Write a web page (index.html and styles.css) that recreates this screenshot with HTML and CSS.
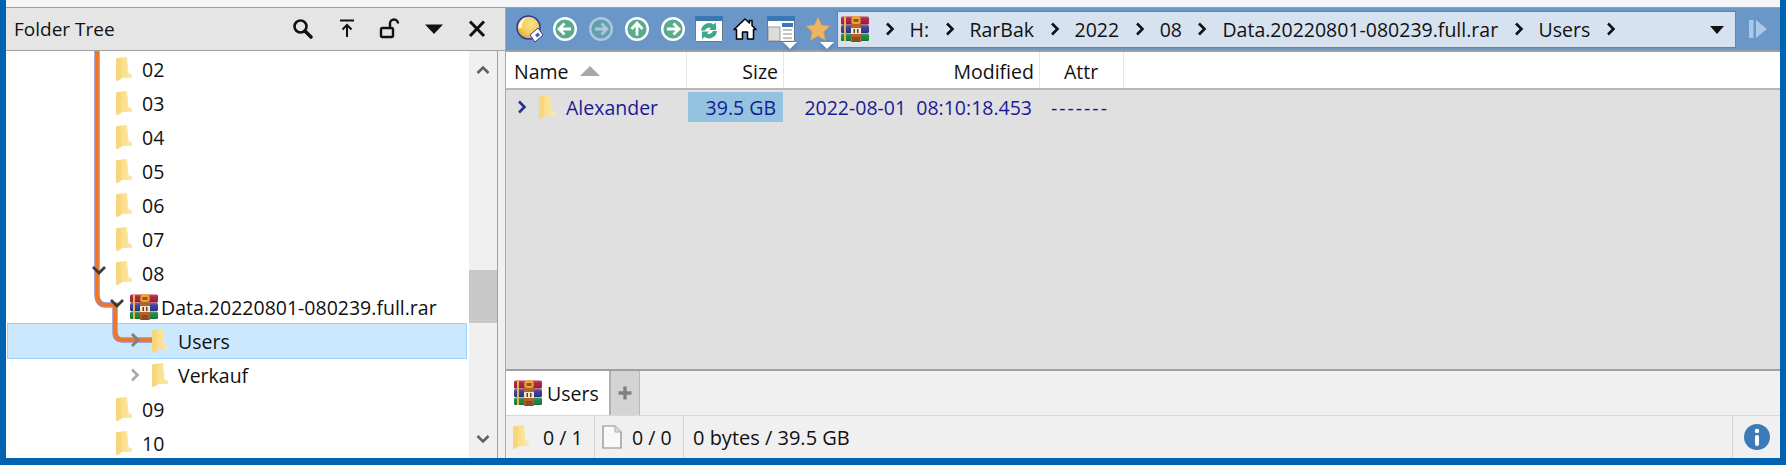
FILE: index.html
```html
<!DOCTYPE html>
<html lang="en">
<head>
    <meta charset="UTF-8">
    <meta name="viewport" content="width=device-width, initial-scale=1.0">
    <title>Folder Tree</title>
    <link rel="stylesheet" href="styles.css">
</head>
<body>
    <!-- shared icons -->
    <svg class="icon-defs" width="0" height="0">
        <defs>
            <linearGradient id="folderFill" x1="0" y1="0" x2="1" y2="0">
                <stop offset="0" stop-color="#f8da86"/>
                <stop offset="0.5" stop-color="#fbe08f"/>
                <stop offset="1" stop-color="#fbe8ac"/>
            </linearGradient>
            <radialGradient id="logoFill" cx="0.6" cy="0.35" r="0.7">
                <stop offset="0" stop-color="#f8e48a"/>
                <stop offset="0.7" stop-color="#f0c650"/>
                <stop offset="1" stop-color="#d09a3a"/>
            </radialGradient>
            <linearGradient id="bookShade" x1="0" y1="0" x2="0" y2="1">
                <stop offset="0" stop-color="#fff" stop-opacity="0.25"/>
                <stop offset="0.6" stop-color="#000" stop-opacity="0"/>
                <stop offset="1" stop-color="#000" stop-opacity="0.25"/>
            </linearGradient>
            <symbol id="folder" viewBox="0 0 16 24">
                <path d="M0 2.500 L1 1 L11 0 L12.500 16 L16 17.500 L16 21 L6 21 L6 21.500 L1.500 24 L0 23 Z" fill="url(#folderFill)"/>
                <path d="M0 2.500 L1 1 L5 1 L5 21 L1.500 24 L0 23 Z" fill="#f7d67e"/>
            </symbol>
            <symbol id="rar" viewBox="0 0 28 26">
                <rect x="0" y="0.500" width="28" height="8" rx="1.500" fill="#b42143"/>
                <rect x="0" y="0.500" width="28" height="8" rx="1.500" fill="url(#bookShade)"/>
                <rect x="0" y="9" width="28" height="8" rx="1.500" fill="#3c3f9e"/>
                <rect x="0" y="9" width="28" height="8" rx="1.500" fill="url(#bookShade)"/>
                <rect x="0" y="17.500" width="28" height="7.500" rx="1.500" fill="#1f8a47"/>
                <rect x="0" y="17.500" width="28" height="7.500" rx="1.500" fill="url(#bookShade)"/>
                <rect x="3" y="0.500" width="2" height="24.500" fill="#e5b64a"/>
                <rect x="10" y="4" width="10" height="22" fill="#b4622a"/>
                <rect x="10.500" y="0" width="9" height="8" rx="3" fill="#eba53a"/>
                <rect x="12.500" y="3" width="5" height="3" fill="#8c5a1e"/>
                <rect x="10" y="12" width="10" height="6" fill="#f1e7cf"/>
                <rect x="12.500" y="13" width="1.500" height="4" fill="#6b3a18"/>
                <rect x="16" y="13" width="1.500" height="4" fill="#6b3a18"/>
                <rect x="11.500" y="21" width="7" height="5" fill="#8c4a1e"/>
            </symbol>
            <symbol id="chev-right" viewBox="0 0 10 14">
                <path d="M2 1.500 L7.500 7 L2 12.500" fill="none" stroke="currentColor" stroke-width="2.600"/>
            </symbol>
            <symbol id="chev-down" viewBox="0 0 14 10">
                <path d="M1.500 2 L7 7.500 L12.500 2" fill="none" stroke="currentColor" stroke-width="2.600"/>
            </symbol>
        </defs>
    </svg>

    <div class="window">
        <div class="top-strip"></div>
        <div class="panes">
            <section class="tree-pane">
                <header class="pane-title">
                    <span class="pane-name">Folder Tree</span>
                    <div class="pane-tools">
                        <svg width="24" height="24" viewBox="0 0 24 24"><circle cx="9.500" cy="9.500" r="6" fill="none" stroke="#111" stroke-width="2.600"/><path d="M14 14 L20 20" stroke="#111" stroke-width="3.600" stroke-linecap="round"/></svg>
                        <svg width="24" height="24" viewBox="0 0 24 24"><path d="M5 3.500 H19" stroke="#111" stroke-width="2"/><path d="M12 20 V8 M7.500 12.500 L12 8 L16.500 12.500" fill="none" stroke="#111" stroke-width="2"/></svg>
                        <svg width="24" height="24" viewBox="0 0 24 24"><rect x="3" y="11" width="12" height="9" rx="1.500" fill="none" stroke="#111" stroke-width="2.400"/><path d="M12 11 V6.500 A3.800 3.800 0 0 1 20 6.500" fill="none" stroke="#111" stroke-width="2.400"/></svg>
                        <svg width="24" height="24" viewBox="0 0 24 24"><path d="M3 7.500 H21 L12 17 Z" fill="#111"/></svg>
                        <svg width="24" height="24" viewBox="0 0 24 24"><path d="M5 4.500 L19 19 M19 4.500 L5 19" stroke="#111" stroke-width="3"/></svg>
                    </div>
                </header>
                <div class="tree-box">
                    <div class="tree">
                        <ul class="tree-list">
                            <li class="tree-row depth-1"><span class="twisty"></span><svg class="folder"><use href="#folder"/></svg><span>02</span></li>
                            <li class="tree-row depth-1"><span class="twisty"></span><svg class="folder"><use href="#folder"/></svg><span>03</span></li>
                            <li class="tree-row depth-1"><span class="twisty"></span><svg class="folder"><use href="#folder"/></svg><span>04</span></li>
                            <li class="tree-row depth-1"><span class="twisty"></span><svg class="folder"><use href="#folder"/></svg><span>05</span></li>
                            <li class="tree-row depth-1"><span class="twisty"></span><svg class="folder"><use href="#folder"/></svg><span>06</span></li>
                            <li class="tree-row depth-1"><span class="twisty"></span><svg class="folder"><use href="#folder"/></svg><span>07</span></li>
                            <li class="tree-row depth-1"><span class="twisty"></span><svg class="folder"><use href="#folder"/></svg><span>08</span></li>
                            <li class="tree-row depth-2 archive"><span class="twisty"></span><svg class="rar"><use href="#rar"/></svg><span>Data.20220801-080239.full.rar</span></li>
                            <li class="tree-row depth-3 selected"><span class="twisty"></span><svg class="folder"><use href="#folder"/></svg><span>Users</span></li>
                            <li class="tree-row depth-3"><span class="twisty"><svg class="chev-grey" width="10" height="14"><use href="#chev-right"/></svg></span><svg class="folder"><use href="#folder"/></svg><span>Verkauf</span></li>
                            <li class="tree-row depth-1"><span class="twisty"></span><svg class="folder"><use href="#folder"/></svg><span>09</span></li>
                            <li class="tree-row depth-1"><span class="twisty"></span><svg class="folder"><use href="#folder"/></svg><span>10</span></li>
                        </ul>
                        <!-- highlighted path, drawn over the rows -->
                        <svg class="tree-path" width="170" height="407" viewBox="0 0 170 407">
                            <path d="M91 0 V243 Q91 254 100 254 H109 V281 Q109 289 117 289 H146" fill="none" stroke="#9a8fd0" stroke-width="5.500"/>
                            <path d="M91 0 V243 Q91 254 100 254 H109 V281 Q109 289 117 289 H146" fill="none" stroke="#f5761a" stroke-width="3.500"/>
                            <path d="M87 216 L93 222 L99 216" fill="none" stroke="#3a3a3a" stroke-width="2.800"/>
                            <path d="M105 249 L111 255 L117 249" fill="none" stroke="#3a3a3a" stroke-width="2.800"/>
                            <path d="M126 283 L132 289 L126 295" fill="none" stroke="#808080" stroke-width="3"/>
                        </svg>
                    </div>
                    <div class="scrollbar">
                        <svg class="scroll-arrow" width="14" height="10"><use href="#chev-down" transform="rotate(180 7 5)"/></svg>
                        <div class="scroll-thumb"></div>
                        <svg class="scroll-arrow" width="14" height="10"><use href="#chev-down"/></svg>
                    </div>
                </div>
            </section>

            <section class="main-pane">
                <div class="toolbar">
                    <svg class="tool-logo" width="28" height="28" viewBox="0 0 28 28">
                        <circle cx="12.500" cy="12.500" r="11.500" fill="url(#logoFill)" stroke="#2a3a9a" stroke-width="1.500"/>
                        <path d="M2.500 14 A10 10 0 0 1 11 2.500 A12 12 0 0 0 6 13 A8 8 0 0 0 2.500 14 Z" fill="#fff6d0"/>
                        <path d="M14 20 L22 13 L27 20 L19 27 Z" fill="#fff" stroke="#3a3a8a"/>
                        <path d="M19 20 L22 17.500 L24 20 L21 22.500 Z" fill="#4a5ac0"/>
                    </svg>
                    <svg class="nav-btn" width="26" height="26" viewBox="0 0 26 26"><circle cx="13" cy="13" r="10.800" fill="#58ab8c" stroke="#fff" stroke-width="2.400"/><path d="M19 13 H8 M12.500 7.500 L7 13 L12.500 18.500" fill="none" stroke="#fff" stroke-width="2.800"/></svg>
                    <svg class="nav-btn off" width="26" height="26" viewBox="0 0 26 26"><circle cx="13" cy="13" r="10.800" fill="#58ab8c" stroke="#fff" stroke-width="2.400"/><path d="M7 13 H18 M13.500 7.500 L19 13 L13.500 18.500" fill="none" stroke="#fff" stroke-width="2.800"/></svg>
                    <svg class="nav-btn" width="26" height="26" viewBox="0 0 26 26"><circle cx="13" cy="13" r="10.800" fill="#58ab8c" stroke="#fff" stroke-width="2.400"/><path d="M13 19.500 V8 M7.500 13 L13 7 L18.500 13" fill="none" stroke="#fff" stroke-width="2.800"/></svg>
                    <svg class="nav-btn" width="26" height="26" viewBox="0 0 26 26"><circle cx="13" cy="13" r="10.800" fill="#58ab8c" stroke="#fff" stroke-width="2.400"/><path d="M7 13 H18 M13.500 7.500 L19 13 L13.500 18.500" fill="none" stroke="#fff" stroke-width="2.800"/></svg>
                    <svg class="tool-window" width="28" height="26" viewBox="0 0 28 26">
                        <rect x="0.500" y="0.500" width="27" height="25" rx="1" fill="#fff" stroke="#6a7a8a"/>
                        <rect x="0" y="0" width="28" height="5" fill="#3a78b5"/>
                        <path d="M6 14.500 A8 8 0 0 1 18.500 8.500 L21 6.500 V14 H14 L16 12 A4.500 4.500 0 0 0 10 14.500 Z" fill="#3fa888"/>
                        <path d="M22 15 A8 8 0 0 1 9.500 21 L7 23 V15.500 H14 L12 17.500 A4.500 4.500 0 0 0 18 15 Z" fill="#3fa888"/>
                    </svg>
                    <svg class="tool-home" width="24" height="24" viewBox="0 0 24 24">
                        <path d="M12 2 L16.500 6 V3.500 H19 V8.500 L23 12.500 L20.500 12.500 V22 H14.500 V15 H9.500 V22 H3.500 V12.500 H1 Z" fill="#fff" stroke="#000" stroke-width="1.500" stroke-linejoin="round"/>
                    </svg>
                    <div class="tool-drop tool-view">
                        <svg width="28" height="26" viewBox="0 0 28 26">
                            <rect x="0.500" y="0.500" width="27" height="25" rx="1" fill="#fff" stroke="#6a7a8a"/>
                            <rect x="0" y="0" width="28" height="5" fill="#3a78b5"/>
                            <rect x="1" y="11" width="12" height="14" fill="#dcdcdc" stroke="#888" stroke-width="0.800"/>
                            <rect x="15" y="7" width="11" height="4" fill="#3a78b5"/>
                            <path d="M16 14 H25 M16 18 H25 M16 22 H25" stroke="#8a8a8a" stroke-width="1.200"/>
                        </svg>
                        <span class="drop-mark"></span>
                    </div>
                    <div class="tool-drop tool-star">
                        <svg width="26" height="26" viewBox="0 0 26 26">
                            <path d="M13 1 L16.600 9 L25 10 L18.800 15.800 L20.500 24.500 L13 20 L5.500 24.500 L7.200 15.800 L1 10 L9.400 9 Z" fill="#ecb665" stroke="#c89a58" stroke-width="0.800"/>
                        </svg>
                        <span class="drop-mark"></span>
                    </div>
                    <nav class="crumbs">
                        <svg class="rar"><use href="#rar"/></svg>
                        <svg class="sep"><use href="#chev-right"/></svg><span class="crumb">H:</span>
                        <svg class="sep"><use href="#chev-right"/></svg><span class="crumb">RarBak</span>
                        <svg class="sep"><use href="#chev-right"/></svg><span class="crumb">2022</span>
                        <svg class="sep"><use href="#chev-right"/></svg><span class="crumb">08</span>
                        <svg class="sep"><use href="#chev-right"/></svg><span class="crumb">Data.20220801-080239.full.rar</span>
                        <svg class="sep"><use href="#chev-right"/></svg><span class="crumb">Users</span>
                        <svg class="sep"><use href="#chev-right"/></svg>
                        <span class="crumb-caret"></span>
                    </nav>
                    <svg class="tool-next" width="20" height="20" viewBox="0 0 20 20">
                        <rect x="1" y="1" width="4.500" height="18" fill="#a9c9ea"/>
                        <path d="M8 1 L19 10 L8 19 Z" fill="#a9c9ea"/>
                    </svg>
                </div>

                <div class="list-head">
                    <div class="col col-name">Name <span class="sort-up"></span></div>
                    <div class="col col-size">Size</div>
                    <div class="col col-mod">Modified</div>
                    <div class="col col-attr">Attr</div>
                </div>
                <div class="list-body">
                    <div class="list-row">
                        <div class="cell-name">
                            <svg class="row-chev" width="10" height="14"><use href="#chev-right"/></svg>
                            <svg class="folder"><use href="#folder"/></svg>
                            <span>Alexander</span>
                        </div>
                        <div class="cell-size">39.5 GB</div>
                        <div class="cell-mod">2022-08-01&nbsp;&nbsp;08:10:18.453</div>
                        <div class="cell-attr">-------</div>
                    </div>
                </div>

                <div class="tabs">
                    <div class="tab"><svg class="rar"><use href="#rar"/></svg><span>Users</span></div>
                    <div class="tab-add"><svg width="16" height="16" viewBox="0 0 16 16"><path d="M8 1.500 V14.500 M1.500 8 H14.500" stroke="#808080" stroke-width="3.400"/></svg></div>
                </div>
                <footer class="status">
                    <div class="status-part part-dirs"><svg class="folder"><use href="#folder"/></svg><span>0 / 1</span></div>
                    <div class="status-part part-files">
                        <svg width="20" height="24" viewBox="0 0 20 24"><path d="M1 1 H13 L19 7 V23 H1 Z" fill="#f8f8f8" stroke="#8a8a8a" stroke-width="1.200"/><path d="M13 1 V7 H19" fill="#ddd" stroke="#aaa"/></svg>
                        <span>0 / 0</span>
                    </div>
                    <div class="status-part part-bytes">0 bytes / 39.5 GB</div>
                    <div class="status-part part-info">
                        <svg width="26" height="26" viewBox="0 0 26 26"><circle cx="13" cy="13" r="13" fill="#3d7ab8"/><circle cx="13" cy="7" r="2.200" fill="#fff"/><rect x="11" y="11" width="4" height="11" rx="2" fill="#fff"/></svg>
                    </div>
                </footer>
            </section>
        </div>
    </div>
</body>
</html>
```

FILE: styles.css
```css
* {
    margin: 0;
    padding: 0;
    box-sizing: border-box;
}

body {
    width: 1786px;
    height: 465px;
    overflow: hidden;
    font-family: "Open Sans", "Noto Sans", sans-serif;
    font-size: 19.5px;
    color: #111;
}

.icon-defs {
    position: absolute;
}

.window {
    height: 465px;
    background: #0063b1;
    padding: 0 6px 7px 6px;
    display: flex;
    flex-direction: column;
}

.top-strip {
    height: 8px;
    background: #f4f5f7;
    border-bottom: 1px solid #a0a0a0;
}

.panes {
    flex: 1;
    display: flex;
    min-height: 0;
}

/* left pane */

.tree-pane {
    width: 500px;
    display: flex;
    flex-direction: column;
    background: #f0f0f0;
    border-right: 1px solid #a8a8a8;
}

.pane-title {
    height: 43px;
    display: flex;
    align-items: center;
    justify-content: space-between;
    background: #e5e5e5;
    border-bottom: 1px solid #a0a0a0;
    padding: 0 16px 0 8px;
}

.pane-name {
    font-size: 19px;
}

.pane-tools {
    display: flex;
    gap: 19.5px;
}

.tree-box {
    flex: 1;
    display: flex;
    min-height: 0;
    margin-right: 7px;
    border-right: 1px solid #a0a0a0;
    background: #fff;
}

.tree {
    position: relative;
    flex: 1;
    overflow: hidden;
    isolation: isolate;
}

.tree-list {
    list-style: none;
    padding-top: 1px;
}

.tree-row {
    position: relative;
    height: 34px;
    display: flex;
    align-items: center;
    white-space: nowrap;
    margin-left: 1px;
    margin-right: 2px;
    border: 1px solid transparent;
}

/* the selection box sits a pixel above its row */
.tree-row.selected::before {
    content: "";
    position: absolute;
    left: -1px;
    right: -1px;
    top: -2px;
    height: 34px;
    z-index: -1;
    background: #cce8ff;
    border: 1px solid #99d1ff;
}

.twisty {
    width: 18px;
    flex: none;
    display: flex;
    align-items: center;
}

.depth-1 { padding-left: 90px; }
.depth-2 { padding-left: 104px; }
.depth-3 { padding-left: 120px; }

.depth-3 .twisty {
    width: 24px;
    padding-left: 2px;
}

.folder {
    width: 16px;
    height: 24px;
    flex: none;
    margin-right: 10px;
}

.rar {
    width: 28px;
    height: 26px;
    flex: none;
}

.archive .rar {
    margin-right: 3px;
}

.chev-grey {
    color: #a8a8a8;
}

.tree-path {
    position: absolute;
    left: 0;
    top: 0;
    pointer-events: none;
}

.scrollbar {
    width: 28px;
    flex: none;
    background: #f0f0f0;
    display: flex;
    flex-direction: column;
    align-items: center;
    position: relative;
    padding: 14px 0;
    justify-content: space-between;
    color: #606060;
}

.scroll-arrow {
    color: #606060;
}

.scroll-thumb {
    position: absolute;
    left: 0;
    right: 0;
    top: 219px;
    height: 53px;
    background: #c8c8c8;
}

/* right pane */

.main-pane {
    flex: 1;
    min-width: 0;
    display: flex;
    flex-direction: column;
    background: #f0f0f0;
}

.toolbar {
    height: 44px;
    flex: none;
    display: flex;
    align-items: center;
    background: #6b97c8;
    border-bottom: 2px solid #a0a0a0;
    padding-left: 10px;
}

.tool-logo {
    margin-right: 8px;
}

.nav-btn {
    margin-right: 10px;
}

.nav-btn.off {
    opacity: 0.45;
}

.tool-window {
    margin: 0 10px 0 -1px;
}

.tool-home {
    margin-right: 10px;
}

.tool-drop {
    position: relative;
    display: flex;
    margin-right: 10px;
}

.tool-star {
    margin-right: 6px;
}

.drop-mark {
    position: absolute;
    bottom: -7px;
    width: 0;
    height: 0;
    border-left: 7px solid transparent;
    border-right: 7px solid transparent;
    border-top: 7px solid #fff;
    filter: drop-shadow(0 1px 2px #4a74a4);
}

.tool-view .drop-mark {
    right: -2px;
}

.tool-star .drop-mark {
    right: -3px;
}

.crumbs {
    width: 899px;
    height: 37px;
    display: flex;
    align-items: center;
    position: relative;
    background: #d6e2f0;
    border: 1px solid #5c86b5;
    padding-left: 3px;
    white-space: nowrap;
}

.sep {
    width: 10px;
    height: 14px;
    flex: none;
    margin: 0 15px 0 15.5px;
    color: #111;
}

.crumb-caret {
    position: absolute;
    right: 11px;
    top: 14px;
    border-left: 7px solid transparent;
    border-right: 7px solid transparent;
    border-top: 8px solid #111;
}

.tool-next {
    margin-left: 12px;
}

.list-head {
    height: 38px;
    flex: none;
    display: grid;
    grid-template-columns: 181px 97px 256px 84px 1fr;
    background: #fff;
    border-bottom: 2px solid #b8b8b8;
}

.col {
    display: flex;
    align-items: center;
    padding: 2px 5px 0;
    border-right: 1px solid #e6e6e6;
}

.col-name {
    padding-left: 8px;
    gap: 11px;
}

.col-size,
.col-mod {
    justify-content: flex-end;
}

.col-attr {
    padding-left: 24px;
}

.sort-up {
    border-left: 10px solid transparent;
    border-right: 10px solid transparent;
    border-bottom: 10px solid #a8a8a8;
}

.list-body {
    flex: 1;
    min-height: 0;
    background: #e0e0e0;
    border-bottom: 2px solid #a0a0a0;
}

.list-row {
    display: grid;
    grid-template-columns: 181px 97px 256px 84px;
    height: 30px;
    margin-top: 2px;
    align-items: center;
    color: #1a1a96;
}

.cell-name {
    display: flex;
    align-items: center;
    padding-left: 11px;
}

.row-chev {
    color: #26348c;
    margin-right: 12px;
}

.cell-name .folder {
    margin-right: 11px;
}

.cell-size {
    background: #93c3de;
    height: 100%;
    margin: 0 1px;
    padding-right: 7px;
    display: flex;
    align-items: center;
    justify-content: flex-end;
}

.cell-mod {
    text-align: right;
    padding-right: 8px;
}

.cell-attr {
    padding-left: 11px;
    letter-spacing: 2px;
}

.tabs {
    height: 45px;
    flex: none;
    display: flex;
    background: #f0f0f0;
    border-bottom: 1px solid #d8d8d8;
}

.tab {
    width: 105px;
    display: flex;
    align-items: center;
    gap: 5px;
    padding-left: 8px;
    background: #fff;
    border-right: 2px solid #b0b0b0;
}

.tab-add {
    width: 29px;
    display: flex;
    align-items: center;
    justify-content: center;
    background: #d4d4d4;
    border-right: 1px solid #b8b8b8;
}

.status {
    height: 42px;
    flex: none;
    display: flex;
    align-items: stretch;
    background: #f0f0f0;
}

.status-part {
    display: flex;
    align-items: center;
    border-right: 1px solid #d4d4d4;
}

.part-dirs {
    width: 89px;
    padding-left: 7px;
}

.part-dirs .folder {
    margin-right: 14px;
}

.part-files {
    width: 89px;
    padding-left: 7px;
    gap: 10px;
}

.part-bytes {
    flex: 1;
    padding-left: 9px;
    font-size: 20px;
}

.part-info {
    width: 47px;
    border-right: none;
    padding-left: 11px;
}
```
